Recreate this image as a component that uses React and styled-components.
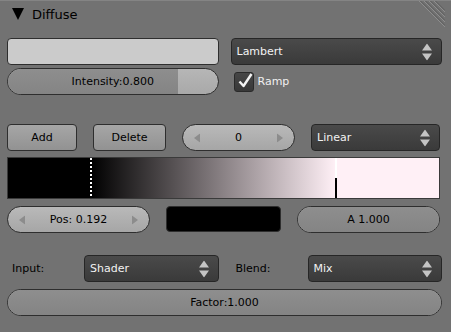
import styled, { createGlobalStyle } from "styled-components";

const GlobalStyle = createGlobalStyle`
  html, body {
    margin: 0;
    padding: 0;
    background: #727272;
  }
  body {
    width: 451px;
    height: 332px;
    overflow: hidden;
    font-family: "DejaVu Sans", "Liberation Sans", sans-serif;
    font-size: 11px;
  }
`;

const Panel = styled.div`
  width: 451px;
  height: 332px;
  box-sizing: border-box;
  border-top: 1px solid #848484;
  background: #727272;
`;

const Header = styled.div`
  position: relative;
  height: 29px;
  display: flex;
  align-items: center;
  padding-left: 12px;
  gap: 8px;
  padding-bottom: 3px;
  box-sizing: border-box;
`;

const Title = styled.span`
  font-size: 13px;
  color: #000;
`;

const Grip = styled.svg`
  position: absolute;
  top: 0;
  right: 6px;
`;

const Body = styled.div`
  padding: 0 9px 0 7px;
  display: flex;
  flex-direction: column;
`;

const Pair = styled.div`
  display: grid;
  grid-template-columns: 1fr 1fr;
  column-gap: 12px;
  row-gap: ${(p) => p.$rowGap || 0}px;
  margin-top: ${(p) => p.$top || 0}px;
`;

const Row = styled.div`
  display: grid;
  grid-template-columns: ${(p) => p.$cols};
  column-gap: ${(p) => p.$gap || 16}px;
  margin-top: ${(p) => p.$top || 0}px;
  margin-right: ${(p) => p.$right || 0}px;
  height: 27px;
`;

const Swatch = styled.div`
  height: ${(p) => p.$h || 26}px;
  box-sizing: border-box;
  border: 1px solid #2e2e2e;
  border-radius: 4px;
  background: ${(p) => p.$color};
`;

const Menu = styled.div`
  position: relative;
  height: 27px;
  box-sizing: border-box;
  border: 1px solid #262626;
  border-radius: 4px;
  background: linear-gradient(#4a4a4a, #3a3a3a);
  color: #f2f2f2;
  display: flex;
  align-items: center;
  padding-left: 5px;
`;

const MenuArrows = styled.svg`
  position: absolute;
  right: 9px;
  top: 50%;
  transform: translateY(-50%);
`;

const Button = styled.div`
  height: 27px;
  box-sizing: border-box;
  border: 1px solid #2e2e2e;
  border-radius: 4px;
  background: linear-gradient(#a6a6a6, #929292);
  color: #000;
  display: flex;
  align-items: center;
  justify-content: center;
`;

const Number = styled.div`
  position: relative;
  height: 27px;
  box-sizing: border-box;
  border: 1px solid #2e2e2e;
  border-radius: 14px;
  background: linear-gradient(#b9b9b9, #a6a6a6);
  color: #000;
  display: flex;
  align-items: center;
  justify-content: center;
`;

const Arrow = styled.svg`
  position: absolute;
  top: 50%;
  transform: translateY(-50%);
  ${(p) => (p.$side === "left" ? "left: 11px;" : "right: 11px;")}
`;

const SliderBox = styled.div`
  position: relative;
  height: 27px;
  box-sizing: border-box;
  border: 1px solid #2e2e2e;
  border-radius: 14px;
  overflow: hidden;
  background: linear-gradient(#b6b6b6, #a9a9a9);
  color: #000;
  display: flex;
  align-items: center;
  justify-content: center;
`;

const SliderFill = styled.div`
  position: absolute;
  left: 0;
  top: 0;
  bottom: 0;
  background: linear-gradient(#8e8e8e, #848484);
`;

const SliderText = styled.span`
  position: relative;
`;

const CheckRow = styled.label`
  display: flex;
  align-items: center;
  gap: 4px;
  padding-left: 3px;
  color: #f0f0f0;
  height: 27px;
`;

const CheckBox = styled.div`
  position: relative;
  width: 20px;
  height: 20px;
  box-sizing: border-box;
  border: 1px solid #2a2a2a;
  border-radius: 3px;
  background: linear-gradient(#464646, #383838);
`;

const CheckMark = styled.svg`
  position: absolute;
  left: 1px;
  top: -2px;
  overflow: visible;
`;

const Ramp = styled.div`
  position: relative;
  height: 42px;
  margin-top: 6px;
  margin-right: 2px;
  box-sizing: border-box;
  border: 1px solid #3a3a3a;
  background: linear-gradient(
    to right,
    #000 0%,
    #000 19.2%,
    #fff0f6 76%,
    #fff0f6 100%
  );
`;

const Marker = styled.div`
  position: absolute;
  top: 0;
  bottom: 0;
  width: 2px;
  margin-left: -1px;
  background: ${(p) =>
    p.$active
      ? "linear-gradient(#fff 0 50%, #000 50% 100%)"
      : "repeating-linear-gradient(#fff 0 2px, #000 2px 4px)"};
`;

const Label = styled.div`
  display: flex;
  align-items: center;
  padding-left: 5px;
  color: #000;
`;

const Sub = styled.div`
  display: grid;
  grid-template-columns: 77px 1fr;
  height: 27px;
`;

function MenuField({ label }) {
  return (
    <Menu>
      {label}
      <MenuArrows width="10" height="17" viewBox="0 0 10 17">
        <path d="M5 0 L10 7 L0 7 Z" fill="#c4c4c4" />
        <path d="M5 17 L10 10 L0 10 Z" fill="#c4c4c4" />
      </MenuArrows>
    </Menu>
  );
}

function NumberField({ label }) {
  return (
    <Number>
      <Arrow $side="left" width="6" height="9" viewBox="0 0 6 9">
        <path d="M0 4.5 L6 0 L6 9 Z" fill="#8c8c8c" />
      </Arrow>
      {label}
      <Arrow $side="right" width="6" height="9" viewBox="0 0 6 9">
        <path d="M6 4.5 L0 0 L0 9 Z" fill="#8c8c8c" />
      </Arrow>
    </Number>
  );
}

function Slider({ label, value }) {
  return (
    <SliderBox>
      <SliderFill style={{ width: `${value * 100}%` }} />
      <SliderText>{label}</SliderText>
    </SliderBox>
  );
}

export default function App() {
  return (
    <>
      <GlobalStyle />
      <Panel>
        <Header>
          <svg width="12" height="12" viewBox="0 0 12 12">
            <path d="M0 0 L12 0 L6 12 Z" fill="#000" />
          </svg>
          <Title>Diffuse</Title>
          <Grip width="26" height="26" viewBox="0 0 26 26">
            {[0, 5, 10, 15].map((o) => (
              <g key={o}>
                <line x1={o} y1="0" x2="26" y2={26 - o} stroke="#8e8e8e" strokeWidth="1" />
                <line x1={o + 1.5} y1="0" x2="26" y2={24.5 - o} stroke="#5c5c5c" strokeWidth="1" />
              </g>
            ))}
          </Grip>
        </Header>
        <Body>
          <Pair $top={8} $rowGap={3}>
            <Swatch $color="#cbcbcb" $h={27} />
            <MenuField label="Lambert" />
            <Slider label="Intensity:0.800" value={0.81} />
            <CheckRow>
              <CheckBox>
                <CheckMark width="18" height="20" viewBox="0 0 18 20">
                  <path
                    d="M3.5 10.5 L7.5 15 L15.5 3"
                    fill="none"
                    stroke="#f4f4f4"
                    strokeWidth="2.4"
                    strokeLinejoin="round"
                  />
                </CheckMark>
              </CheckBox>
              Ramp
            </CheckRow>
          </Pair>

          <Row $top={29} $right={2} $cols="70px 73px 113px 1fr">
            <Button>Add</Button>
            <Button>Delete</Button>
            <NumberField label="0" />
            <MenuField label="Linear" />
          </Row>

          <Ramp>
            <Marker style={{ left: "19.2%" }} />
            <Marker $active style={{ left: "76%" }} />
          </Ramp>

          <Row $top={7} $right={2} $cols="143px 115px 1fr">
            <NumberField label="Pos: 0.192" />
            <Swatch $color="#000" $h={26} />
            <Slider label="A 1.000" value={1} />
          </Row>

          <Pair $top={22}>
            <Sub>
              <Label>Input:</Label>
              <MenuField label="Shader" />
            </Sub>
            <Sub>
              <Label>Blend:</Label>
              <MenuField label="Mix" />
            </Sub>
          </Pair>

          <Row $top={7} $cols="1fr">
            <Slider label="Factor:1.000" value={1} />
          </Row>
        </Body>
      </Panel>
    </>
  );
}
